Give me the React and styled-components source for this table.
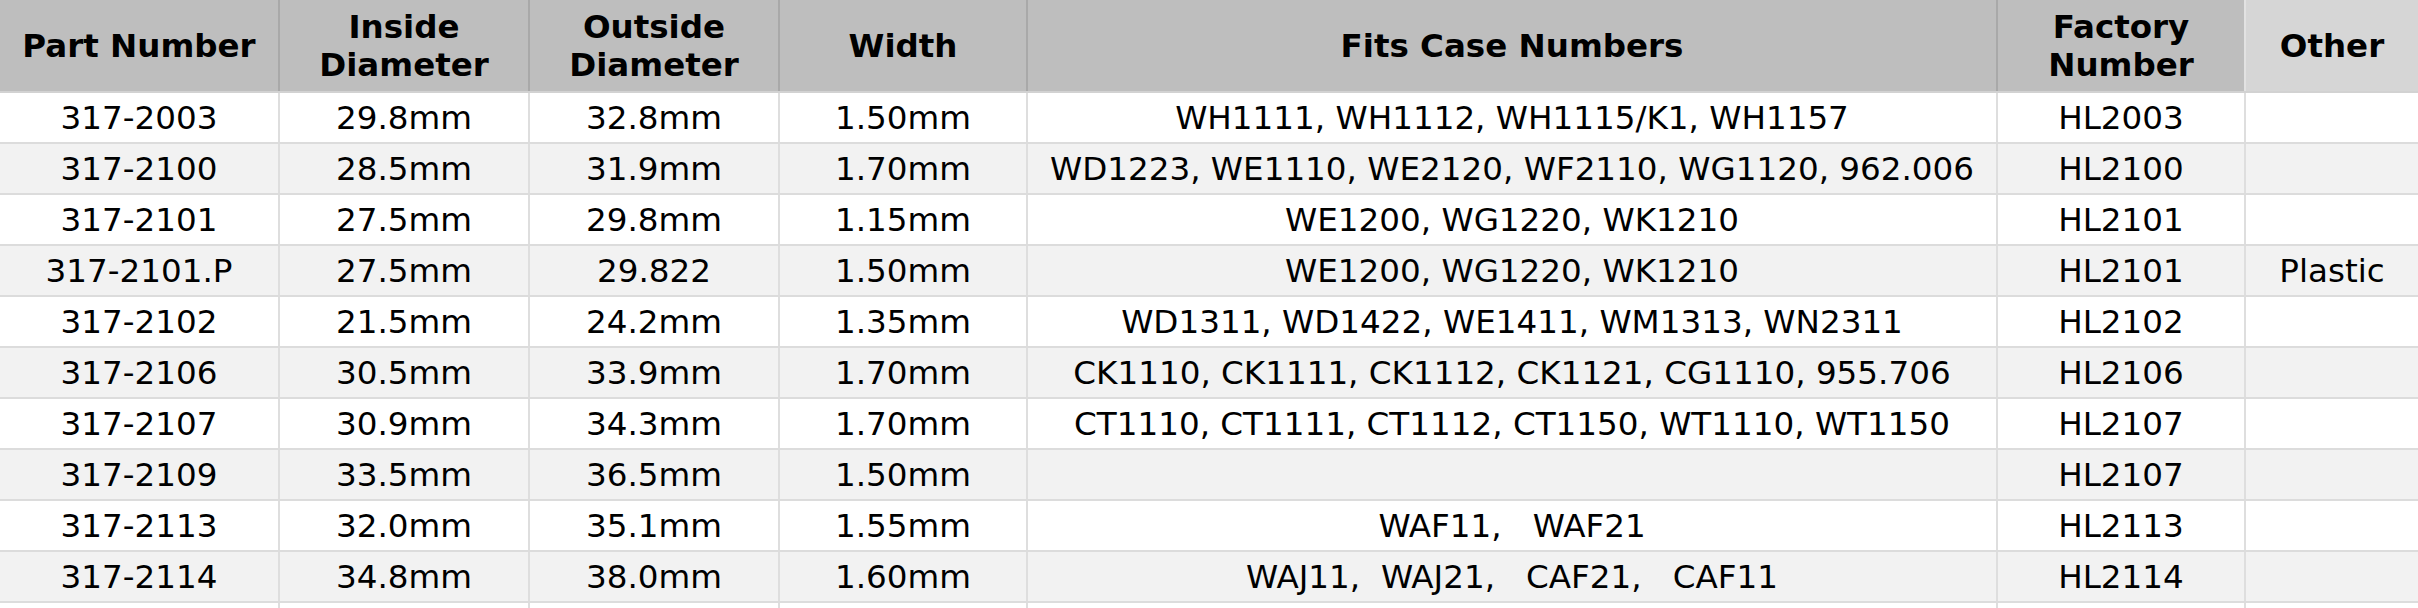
import React from 'react';
import styled, { createGlobalStyle } from 'styled-components';

const GlobalStyle = createGlobalStyle`
  html, body {
    margin: 0;
    padding: 0;
    background: #ffffff;
  }
`;

const columns = [
  { key: 'part', title: 'Part Number', width: 279 },
  { key: 'inside', title: 'Inside\nDiameter', width: 250 },
  { key: 'outside', title: 'Outside\nDiameter', width: 250 },
  { key: 'width', title: 'Width', width: 248 },
  { key: 'fits', title: 'Fits Case Numbers', width: 970 },
  { key: 'factory', title: 'Factory\nNumber', width: 248 },
  { key: 'other', title: 'Other', width: 173, light: true },
];

const rows = [
  ['317-2003', '29.8mm', '32.8mm', '1.50mm', 'WH1111, WH1112, WH1115/K1, WH1157', 'HL2003', ''],
  ['317-2100', '28.5mm', '31.9mm', '1.70mm', 'WD1223, WE1110, WE2120, WF2110, WG1120, 962.006', 'HL2100', ''],
  ['317-2101', '27.5mm', '29.8mm', '1.15mm', 'WE1200, WG1220, WK1210', 'HL2101', ''],
  ['317-2101.P', '27.5mm', '29.822', '1.50mm', 'WE1200, WG1220, WK1210', 'HL2101', 'Plastic'],
  ['317-2102', '21.5mm', '24.2mm', '1.35mm', 'WD1311, WD1422, WE1411, WM1313, WN2311', 'HL2102', ''],
  ['317-2106', '30.5mm', '33.9mm', '1.70mm', 'CK1110, CK1111, CK1112, CK1121, CG1110, 955.706', 'HL2106', ''],
  ['317-2107', '30.9mm', '34.3mm', '1.70mm', 'CT1110, CT1111, CT1112, CT1150, WT1110, WT1150', 'HL2107', ''],
  ['317-2109', '33.5mm', '36.5mm', '1.50mm', '', 'HL2107', ''],
  ['317-2113', '32.0mm', '35.1mm', '1.55mm', 'WAF11,   WAF21', 'HL2113', ''],
  ['317-2114', '34.8mm', '38.0mm', '1.60mm', 'WAJ11,  WAJ21,   CAF21,   CAF11', 'HL2114', ''],
  ['', '', '', '', '', '', ''],
];

const Table = styled.table`
  width: 2418px;
  table-layout: fixed;
  border-collapse: collapse;
  font-family: "DejaVu Sans", Verdana, sans-serif;
  color: #000;
`;

const HeadCell = styled.th`
  height: 92px;
  padding: 0 6px;
  box-sizing: border-box;
  background: ${({ $light }) => ($light ? '#d6d6d6' : '#bebebe')};
  border-left: 2px solid ${({ $light }) => ($light ? '#e2e2e2' : '#a9a9a9')};
  border-bottom: 2px solid #d2d2d2;
  font-size: 32.5px;
  font-weight: bold;
  line-height: 38px;
  text-align: center;
  vertical-align: middle;
  white-space: pre-line;

  &:first-child {
    border-left: none;
  }
`;

const Row = styled.tr`
  background: ${({ $shade }) => ($shade ? '#f2f2f2' : '#ffffff')};
`;

const Cell = styled.td`
  height: 49px;
  padding: 0 6px;
  border-left: 2px solid #dedede;
  border-bottom: 2px solid #dcdcdc;
  font-size: 32.6px;
  line-height: 38px;
  text-align: center;
  vertical-align: middle;
  white-space: pre;
  overflow: hidden;

  &:first-child {
    border-left: none;
  }
`;

export default function App() {
  return (
    <>
      <GlobalStyle />
      <Table>
        <colgroup>
          {columns.map((c) => (
            <col key={c.key} style={{ width: c.width }} />
          ))}
        </colgroup>
        <thead>
          <tr>
            {columns.map((c) => (
              <HeadCell key={c.key} $light={c.light}>
                {c.title}
              </HeadCell>
            ))}
          </tr>
        </thead>
        <tbody>
          {rows.map((r, i) => (
            <Row key={i} $shade={i % 2 === 1}>
              {r.map((v, j) => (
                <Cell key={j}>{v}</Cell>
              ))}
            </Row>
          ))}
        </tbody>
      </Table>
    </>
  );
}
